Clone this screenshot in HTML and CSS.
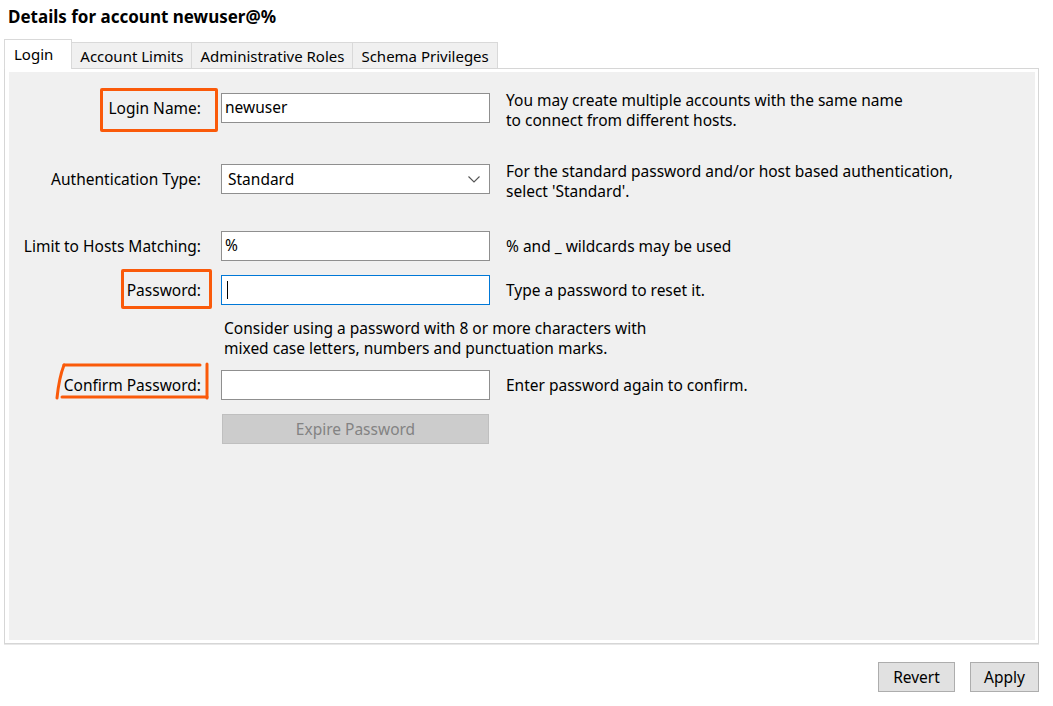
FILE: index.html
```html
<!DOCTYPE html>
<html lang="en">
<head>
<meta charset="utf-8">
<title>Details for account newuser@%</title>
<link rel="stylesheet" href="styles.css">
</head>
<body>
<div class="page">
  <h1 class="title">Details for account newuser@%</h1>
  <div class="tabs">
    <div class="tab tab-active">Login</div>
    <div class="tab">Account Limits</div>
    <div class="tab">Administrative Roles</div>
    <div class="tab">Schema Privileges</div>
  </div>
  <div class="panel">
    <div class="panel-inner">
      <div class="row row-first">
        <label class="label">Login Name:</label>
        <div class="field"><div class="input">newuser</div></div>
        <div class="help help-2">You may create multiple accounts with the same name<br>to connect from different hosts.</div>
      </div>
      <div class="row row-auth">
        <label class="label">Authentication Type:</label>
        <div class="field">
          <div class="input select">Standard
            <svg class="chevron" width="12" height="7" viewBox="0 0 12 7"><path d="M0.5 0.5 L6 6 L11.5 0.5" fill="none" stroke="#555" stroke-width="1.1"/></svg>
          </div>
        </div>
        <div class="help help-2">For the standard password and/or host based authentication,<br>select 'Standard'.</div>
      </div>
      <div class="row row-hosts">
        <label class="label">Limit to Hosts Matching:</label>
        <div class="field"><div class="input">%</div></div>
        <div class="help">% and _ wildcards may be used</div>
      </div>
      <div class="row row-pass">
        <label class="label">Password:</label>
        <div class="field"><div class="input input-focus"><span class="caret"></span></div></div>
        <div class="help">Type a password to reset it.</div>
      </div>
      <div class="note">Consider using a password with 8 or more characters with<br>mixed case letters, numbers and punctuation marks.</div>
      <div class="row row-confirm">
        <label class="label">Confirm Password:</label>
        <div class="field"><div class="input"></div></div>
        <div class="help">Enter password again to confirm.</div>
      </div>
      <div class="row row-expire">
        <div class="label"></div>
        <div class="field"><div class="btn btn-disabled">Expire Password</div></div>
        <div></div>
      </div>

      <div class="mark mark-login"></div>
      <div class="mark mark-pass"></div>
      <svg class="mark-confirm" width="162" height="44" viewBox="0 0 162 44">
        <g fill="none" stroke="#fa5a0a" stroke-width="3" stroke-linecap="round">
          <path d="M11 5 L147 5"/>
          <path d="M11 5 Q6 18 4 38"/>
          <path d="M9 37 L154 37"/>
          <path d="M154 4 L154 38"/>
        </g>
      </svg>
    </div>
  </div>
  <div class="actions">
    <div class="btn btn-action btn-revert">Revert</div>
    <div class="btn btn-action btn-apply">Apply</div>
  </div>
</div>
</body>
</html>
```

FILE: styles.css
```css
html, body {
  margin: 0;
  padding: 0;
  background: #ffffff;
}

body {
  font-family: "Noto Sans", "Open Sans", sans-serif;
  font-size: 15.5px;
  color: #000;
  width: 1053px;
  height: 706px;
  overflow: hidden;
}

.page {
  display: flex;
  flex-direction: column;
}

.title {
  margin: 0;
  padding: 7px 0 0 8px;
  font-size: 17px;
  font-weight: bold;
  line-height: 20px;
  height: 20px;
}

.tabs {
  display: flex;
  align-items: flex-end;
  margin: 12px 0 0 4px;
  height: 29px;
  position: relative;
  z-index: 1;
}

.tab {
  height: 25px;
  line-height: 26px;
  padding: 0 8px;
  background: #f0f0f0;
  border: 1px solid #d9d9d9;
  border-bottom: none;
  margin-left: -1px;
  font-size: 15px;
  white-space: nowrap;
}

.tab-active {
  height: 29px;
  line-height: 28px;
  margin-left: 0;
  padding: 0 18px 0 9px;
  background: #ffffff;
  border-color: #d9d9d9;
  margin-bottom: -1px;
  position: relative;
  z-index: 2;
}

.panel {
  margin: 0 14px 0 4px;
  height: 568px;
  border: 1px solid #d6d6d6;
  padding: 3px 3px 3px 4px;
  background: #ffffff;
  box-shadow: 0 1px 0 #e8e8e8;
}

.panel-inner {
  position: relative;
  height: 100%;
  background: #f0f0f0;
  padding-top: 21px;
  box-sizing: border-box;
}

.row {
  display: grid;
  grid-template-columns: 212px 285px 1fr;
  grid-template-rows: 30px;
  align-items: center;
  height: 30px;
}

.row-auth { margin-top: 41px; }
.row-hosts { margin-top: 37px; }
.row-pass { margin-top: 14px; }
.row-confirm { margin-top: 12px; }
.row-expire { margin-top: 14px; }

.label {
  text-align: right;
  padding-right: 20px;
  white-space: nowrap;
  line-height: 19px;
}

.field {
  display: flex;
}

.input {
  position: relative;
  box-sizing: border-box;
  width: 269px;
  height: 30px;
  border: 1px solid #8f8f8f;
  background: #ffffff;
  padding: 0 6px 0 3px;
  line-height: 26px;
  white-space: nowrap;
}

.select {
  display: flex;
  align-items: center;
  justify-content: space-between;
  padding-left: 6px;
  padding-right: 9px;
}

.chevron {
  display: block;
}

.input-focus {
  border-color: #0078d7;
}

.caret {
  position: absolute;
  left: 5px;
  top: 5px;
  width: 1px;
  height: 18px;
  background: #000;
}

.help {
  line-height: 20px;
  white-space: nowrap;
}

.help-2 {
  padding-top: 3px;
}

.note {
  margin: 13px 0 0 215px;
  line-height: 20px;
  white-space: nowrap;
}

.btn {
  box-sizing: border-box;
  height: 30px;
  line-height: 28px;
  text-align: center;
  border: 1px solid #adadad;
  background: #e1e1e1;
  white-space: nowrap;
}

.btn-disabled {
  width: 267px;
  margin-left: 1px;
  background: #cccccc;
  border-color: #bfbfbf;
  color: #838383;
}

.actions {
  display: flex;
  justify-content: flex-end;
  gap: 15px;
  margin: 18px 14px 0 0;
}

.btn-revert { width: 77px; }
.btn-apply { width: 69px; }

.mark {
  position: absolute;
  border: 3px solid #fa5a0a;
  border-radius: 2px;
  box-sizing: border-box;
}

.mark-login {
  left: 91px;
  top: 16px;
  width: 118px;
  height: 44px;
}

.mark-pass {
  left: 112px;
  top: 197px;
  width: 91px;
  height: 40px;
}

.mark-confirm {
  position: absolute;
  left: 44px;
  top: 288px;
}
```
